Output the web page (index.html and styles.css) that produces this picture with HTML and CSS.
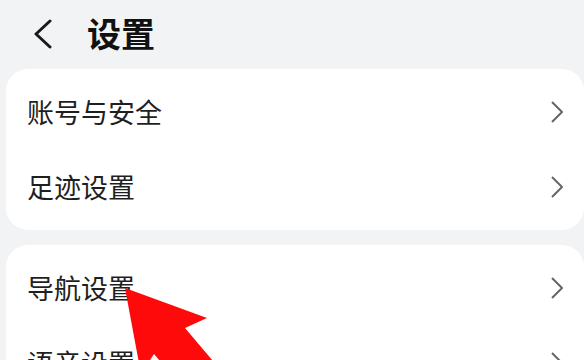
FILE: index.html
```html
<!DOCTYPE html>
<html lang="zh-CN">
<head>
  <meta charset="UTF-8">
  <title>设置</title>
  <link rel="stylesheet" href="styles.css">
</head>
<body>

  <div class="header">
    <svg class="back" width="24" height="32" viewBox="0 0 24 32">
      <polyline points="20,4 6,17 20,30" fill="none" stroke="#1a1a1a" stroke-width="3" stroke-linecap="round" stroke-linejoin="round"/>
    </svg>
    <div class="title">设置</div>
  </div>

  <div class="card">
    <div class="row">
      <span class="label">账号与安全</span>
      <svg class="chev" width="14" height="22" viewBox="0 0 14 22"><polyline points="2,1 12,11 2,21" fill="none" stroke="#666" stroke-width="2" stroke-linejoin="round"/></svg>
    </div>
    <div class="row">
      <span class="label">足迹设置</span>
      <svg class="chev" width="14" height="22" viewBox="0 0 14 22"><polyline points="2,1 12,11 2,21" fill="none" stroke="#666" stroke-width="2" stroke-linejoin="round"/></svg>
    </div>
  </div>

  <div class="card">
    <div class="row">
      <span class="label">导航设置</span>
      <svg class="chev" width="14" height="22" viewBox="0 0 14 22"><polyline points="2,1 12,11 2,21" fill="none" stroke="#666" stroke-width="2" stroke-linejoin="round"/></svg>
    </div>
    <div class="row">
      <span class="label">语音设置</span>
      <svg class="chev" width="14" height="22" viewBox="0 0 14 22"><polyline points="2,1 12,11 2,21" fill="none" stroke="#666" stroke-width="2" stroke-linejoin="round"/></svg>
    </div>
  </div>

  <!-- red pointer arrow over the list -->
  <svg class="pointer" width="584" height="360" viewBox="0 0 584 360">
    <polygon points="125,288 207,318 185,328 224,374 193,400 154,354 141,374" fill="#ff0a0a"/>
  </svg>

</body>
</html>
```

FILE: styles.css
```css
html, body {
  height: 360px;
  overflow: hidden;
}

body {
  margin: 0;
  padding: 0 0 0 6px;
  background: #f2f3f5;
  font-family: 'Noto Sans CJK SC', 'Noto Sans', sans-serif;
  color: #1f1f1f;
  position: relative;
}

.header {
  height: 66px;
  display: flex;
  align-items: center;
  padding-left: 24px;
  margin-bottom: 3px;
}

.back {
  display: block;
}

.title {
  margin-left: 33px;
  font-size: 34px;
  font-weight: bold;
  color: #111;
  line-height: 1;
}

.card {
  background: #fff;
  border-radius: 22px;
  padding: 5px 0 6px;
  margin-bottom: 15px;
}

.row {
  height: 75px;
  display: flex;
  align-items: center;
  justify-content: space-between;
  padding: 0 20px 0 21px;
}

.label {
  font-size: 27px;
  line-height: 1;
}

.chev {
  display: block;
}

.pointer {
  position: absolute;
  top: 0;
  left: 0;
  pointer-events: none;
}
```
